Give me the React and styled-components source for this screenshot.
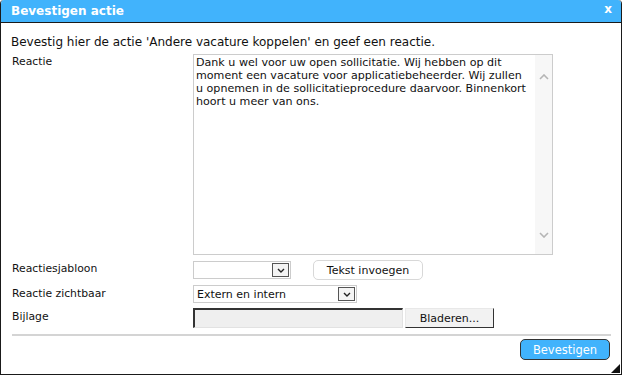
import styled, { createGlobalStyle } from "styled-components";

const GlobalStyle = createGlobalStyle`
  html, body {
    margin: 0;
    padding: 0;
    background: #ffffff;
  }
  body {
    font-family: "DejaVu Sans", Verdana, sans-serif;
  }
`;

const Dialog = styled.div`
  width: 620px;
  height: 374px;
  border: 1px solid #1a1a1a;
  border-top: none;
  border-radius: 4px 4px 0 0;
  background: #ffffff;
  display: flex;
  flex-direction: column;
  position: relative;
  overflow: hidden;
`;

const Header = styled.div`
  height: 22px;
  background: #41b3fc;
  border-bottom: 1px solid #1a1a1a;
  display: flex;
  align-items: center;
  justify-content: space-between;
  padding: 0 9px 0 10px;
  color: #ffffff;
`;

const Title = styled.div`
  font-size: 12px;
  font-weight: 700;
`;

const Close = styled.div`
  font-size: 12px;
  font-weight: 700;
  line-height: 12px;
  margin-top: -5px;
`;

const Content = styled.div`
  padding: 12px 10px 0 10px;
  display: flex;
  flex-direction: column;
`;

const Intro = styled.div`
  font-size: 12px;
  color: #111;
  margin-bottom: 5px;
`;

const Form = styled.div`
  display: grid;
  grid-template-columns: 181px 1fr;
  row-gap: 5px;
  padding-left: 1px;
`;

const Label = styled.div`
  font-size: 10.8px;
  color: #111;
  padding-top: ${(p) => p.$top || 2}px;
`;

const Field = styled.div`
  display: flex;
  align-items: center;
  gap: ${(p) => p.$gap || 0}px;
`;

const TextBox = styled.div`
  width: 358px;
  height: 199px;
  border: 1px solid #cccccc;
  display: flex;
`;

const TextArea = styled.textarea`
  flex: 1;
  border: none;
  outline: none;
  resize: none;
  overflow: hidden;
  white-space: pre;
  padding: 1px 2px;
  margin: 0;
  font-family: "DejaVu Sans", Verdana, sans-serif;
  font-size: 11.1px;
  line-height: 13px;
  color: #111;
`;

const Scrollbar = styled.div`
  width: 17px;
  background: #f7f7f7;
  display: flex;
  flex-direction: column;
  justify-content: space-between;
  align-items: center;
  padding: 19px 0 16px;
`;

const SelectBox = styled.div`
  width: ${(p) => p.$width}px;
  height: 18px;
  border: 1px solid #cccccc;
  display: flex;
  align-items: center;
  justify-content: space-between;
  padding-left: 3px;
  padding-right: 1px;
  font-size: 11px;
  color: #111;
  box-sizing: border-box;
`;

const ArrowBox = styled.div`
  width: 17px;
  height: 14px;
  border: 1px solid #555;
  background: #f4f4f4;
  display: flex;
  align-items: center;
  justify-content: center;
  box-sizing: border-box;
`;

const RoundButton = styled.button`
  height: 20px;
  width: 110px;
  border: 1px solid #d8d8d8;
  border-radius: 5px;
  background: #ffffff;
  font-family: "DejaVu Sans", Verdana, sans-serif;
  font-size: 11px;
  color: #111;
  padding: 0;
`;

const FileInput = styled.div`
  width: 210px;
  height: 20px;
  box-sizing: border-box;
  background: #efefef;
  border-top: 2px solid #333;
  border-left: 2px solid #333;
  border-right: 1px solid #e2e2e2;
  border-bottom: 1px solid #e2e2e2;
`;

const BrowseButton = styled.button`
  width: 89px;
  height: 20px;
  box-sizing: border-box;
  background: #f2f2f2;
  border: 1px solid #333;
  border-top-color: #e8e8e8;
  border-left-color: #e8e8e8;
  font-family: "DejaVu Sans", Verdana, sans-serif;
  font-size: 11px;
  color: #111;
  padding: 0;
  margin-left: 2px;
`;

const Divider = styled.div`
  height: 0;
  border-top: 2px solid #d4d4d4;
  margin: 6px 0 3px 1px;
`;

const Footer = styled.div`
  display: flex;
  justify-content: flex-end;
  padding-right: 1px;
`;

const PrimaryButton = styled.button`
  width: 90px;
  height: 21px;
  background: #41b3fc;
  border: 1px solid #333;
  border-radius: 5px;
  color: #ffffff;
  font-family: "DejaVu Sans", Verdana, sans-serif;
  font-size: 11.5px;
  padding: 0;
`;

const Grip = styled.div`
  position: absolute;
  right: 1px;
  bottom: 1px;
  width: 0;
  height: 0;
  border-left: 9px solid transparent;
  border-bottom: 9px solid #111;
`;

const Chevron = ({ up }) => (
  <svg width="10" height="6" viewBox="0 0 10 6">
    <path
      d={up ? "M1 5 L5 1 L9 5" : "M1 1 L5 5 L9 1"}
      fill="none"
      stroke="#b5b5b5"
      strokeWidth="1.6"
    />
  </svg>
);

const SmallArrow = () => (
  <svg width="8" height="5" viewBox="0 0 8 5">
    <path d="M1 1 L4 4 L7 1" fill="none" stroke="#222" strokeWidth="1.4" />
  </svg>
);

const message = [
  "Dank u wel voor uw open sollicitatie. Wij hebben op dit",
  "moment een vacature voor applicatiebeheerder. Wij zullen",
  "u opnemen in de sollicitatieprocedure daarvoor. Binnenkort",
  "hoort u meer van ons.",
].join("\n");

export default function App() {
  return (
    <>
      <GlobalStyle />
      <Dialog>
        <Header>
          <Title>Bevestigen actie</Title>
          <Close>x</Close>
        </Header>
        <Content>
          <Intro>
            Bevestig hier de actie 'Andere vacature koppelen' en geef een reactie.
          </Intro>
          <Form>
            <Label $top={1}>Reactie</Label>
            <Field>
              <TextBox>
                <TextArea wrap="off" defaultValue={message} />
                <Scrollbar>
                  <Chevron up />
                  <Chevron />
                </Scrollbar>
              </TextBox>
            </Field>

            <Label>Reactiesjabloon</Label>
            <Field $gap={22}>
              <SelectBox $width={98}>
                <span />
                <ArrowBox>
                  <SmallArrow />
                </ArrowBox>
              </SelectBox>
              <RoundButton>Tekst invoegen</RoundButton>
            </Field>

            <Label>Reactie zichtbaar</Label>
            <Field>
              <SelectBox $width={164}>
                <span>Extern en intern</span>
                <ArrowBox>
                  <SmallArrow />
                </ArrowBox>
              </SelectBox>
            </Field>

            <Label>Bijlage</Label>
            <Field>
              <FileInput />
              <BrowseButton>Bladeren...</BrowseButton>
            </Field>
          </Form>
          <Divider />
          <Footer>
            <PrimaryButton>Bevestigen</PrimaryButton>
          </Footer>
        </Content>
        <Grip />
      </Dialog>
    </>
  );
}
